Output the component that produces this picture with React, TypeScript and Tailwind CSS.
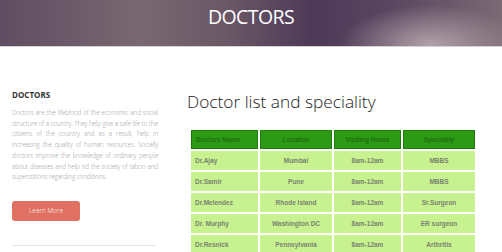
import React from 'react';

const rows = [
  ['Dr.Ajay', 'Mumbai', '8am-12am', 'MBBS'],
  ['Dr.Samir', 'Pune', '8am-12am', 'MBBS'],
  ['Dr.Melendez', 'Rhode Island', '8am-12am', 'Sr.Surgeon'],
  ['Dr. Murphy', 'Washington DC', '8am-12am', 'ER surgeon'],
  ['Dr.Resnick', 'Pennsylvania', '8am-12am', 'Arthritis'],
];

const heads = ['Doctors Name', 'Location', 'Visiting Hours', 'Speciality'];

export default function App() {
  return (
    <div className="w-[502px] h-[252px] overflow-hidden bg-white font-['Open_Sans',sans-serif]">
      {/* Banner */}
      <div className="h-[47px] border-b border-[#d8d2d6] bg-[radial-gradient(ellipse_90px_40px_at_430px_45px,rgba(190,175,180,0.85),transparent),linear-gradient(90deg,#5f4d62_0%,#786870_28%,#6a5866_45%,#4e3a58_62%,#5a4660_78%,#7a6a74_100%)] flex justify-center">
        <h1 className="text-white text-[19.5px] leading-none pt-[7px] tracking-[-0.6px]">DOCTORS</h1>
      </div>

      <div className="flex">
        {/* Sidebar */}
        <div className="w-[146px] ml-[12px] pt-[44px]">
          <h2 className="text-[8px] font-bold text-[#333] leading-none">DOCTORS</h2>
          <p className="mt-[9px] text-[6.3px] leading-[10.7px] text-[#9d9d9d] font-light text-justify tracking-[-0.1px]">
            Doctors are the lifeblood of the economic and social structure of a country. They help give a safe life to the citizens of the country and as a result, help in increasing the quality of human resources. Socially doctors improve the knowledge of ordinary people about diseases and help rid the society of taboo and superstitions regarding conditions.
          </p>
          <button className="mt-[18px] w-[68px] h-[20px] rounded-[3px] bg-[#e07062] text-white text-[6.5px] font-light">
            Learn More
          </button>
          <div className="mt-[24px] w-[144px] border-t border-[#e6e6e6]" />
        </div>

        {/* Content */}
        <div className="ml-[33px] pt-[46px]">
          <h2 className="text-[17.3px] leading-none font-light text-[#222] -ml-[4px]">Doctor list and speciality</h2>
          <div className="mt-[20px] grid grid-cols-[67px_72px_67px_72px] gap-[2px] font-['Liberation_Sans',Arial,sans-serif] text-[6.5px] font-bold">
            {heads.map((h, i) => (
              <div
                key={h}
                className={`h-[19px] flex items-center bg-[#2c9a14] border border-[#1f7a0c] text-[#1f6e10] ${i === 0 ? 'pl-[4px]' : 'justify-center'}`}
              >
                {h}
              </div>
            ))}
            {rows.map((r) =>
              r.map((c, i) => (
                <div
                  key={r[0] + i}
                  className={`h-[19px] flex items-center bg-[#c7f28f] text-[#7a8272] ${i === 0 ? 'pl-[4px]' : 'justify-center'}`}
                >
                  {c}
                </div>
              ))
            )}
          </div>
        </div>
      </div>
    </div>
  );
}
